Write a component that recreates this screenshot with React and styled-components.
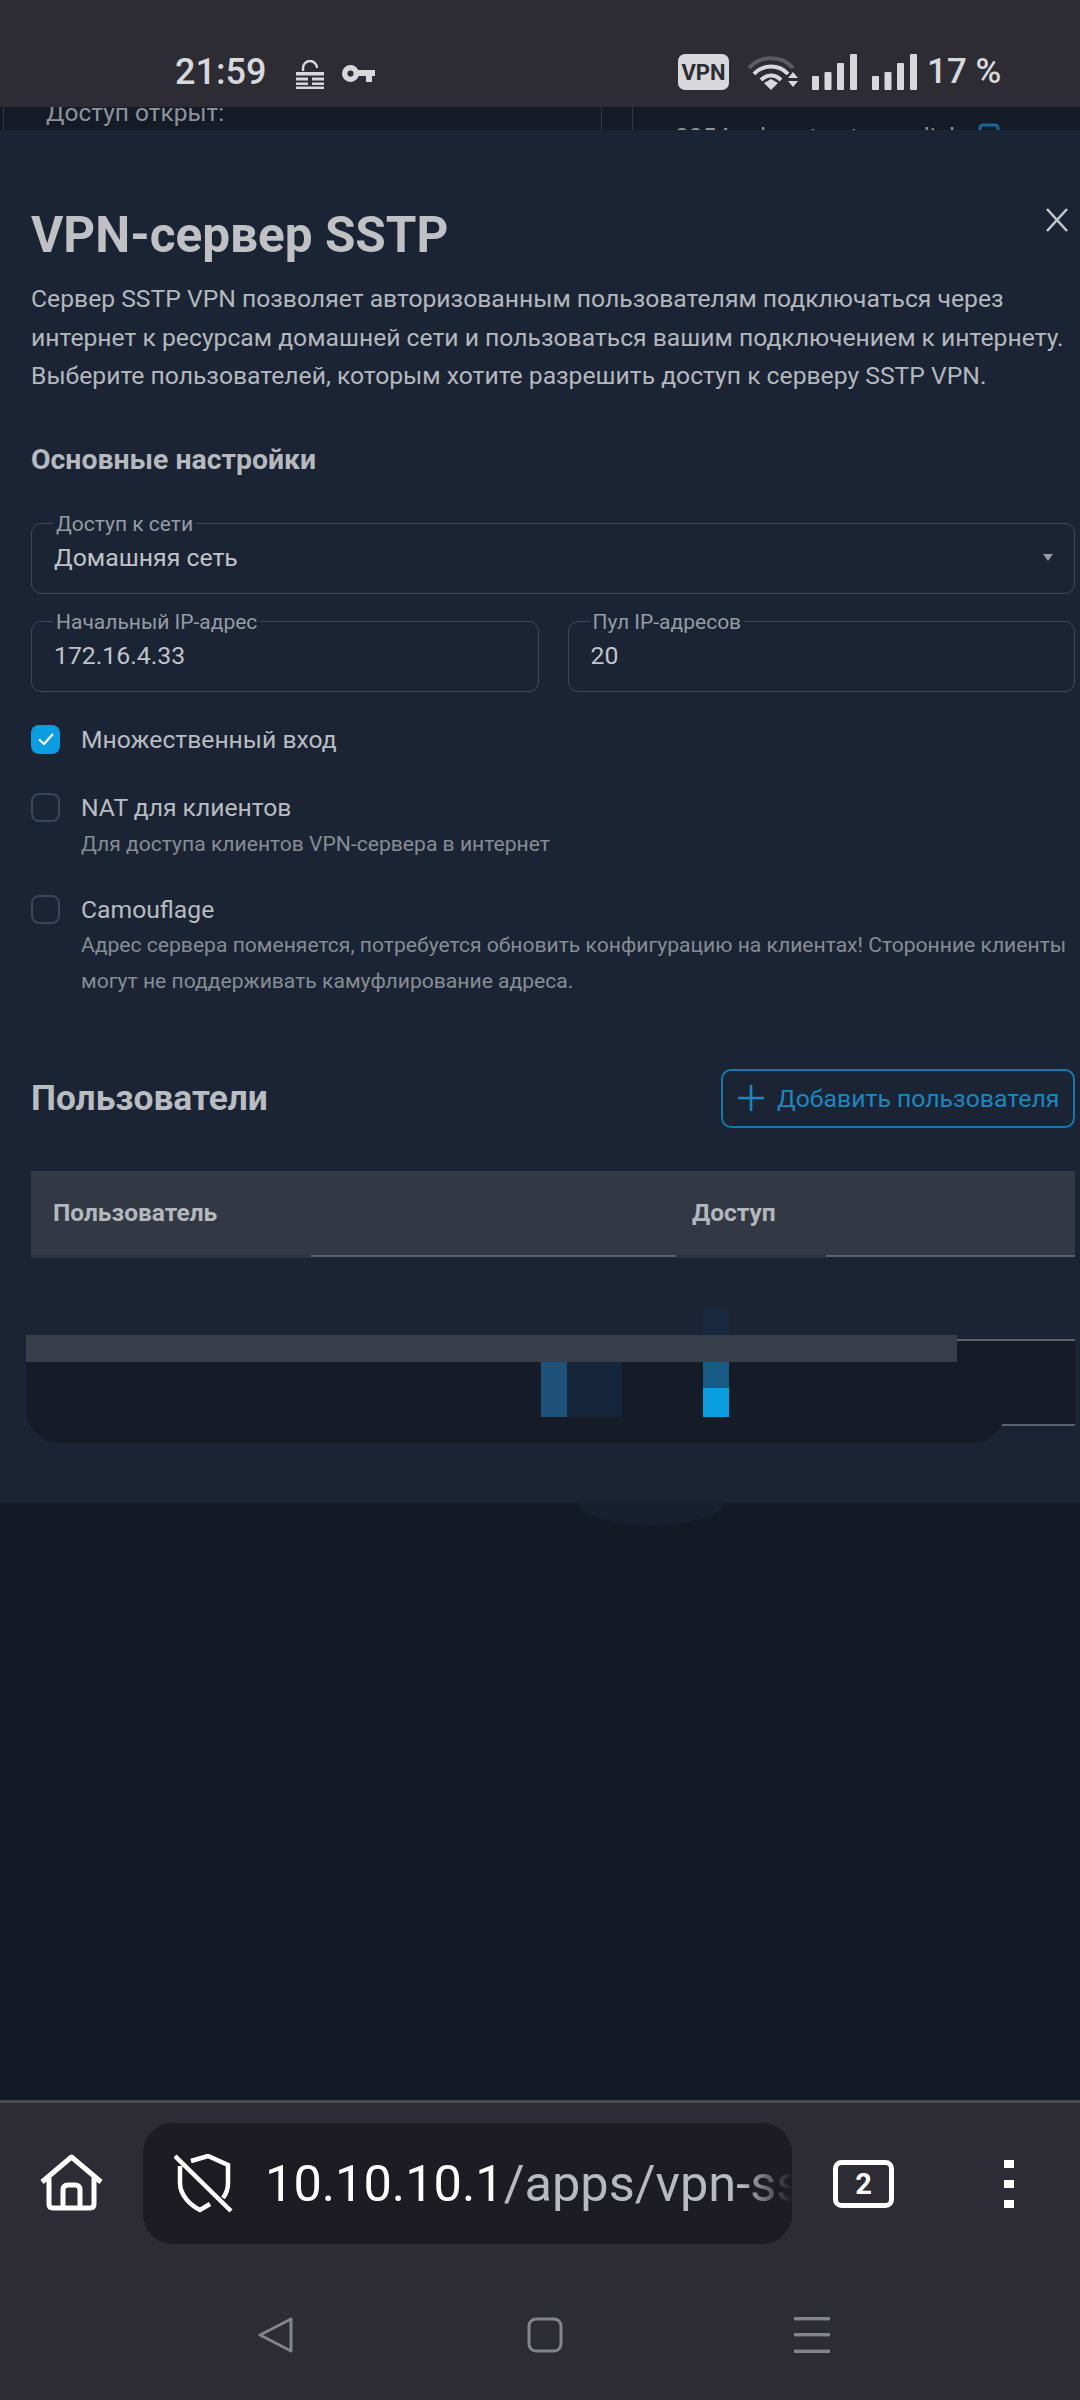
import React from 'react';
import styled, { createGlobalStyle } from 'styled-components';

const GlobalStyle = createGlobalStyle`
  html, body { margin: 0; padding: 0; background: #131a26; }
  * { box-sizing: border-box; }
  body { font-family: Roboto, "Noto Sans", sans-serif; }
`;

const Screen = styled.div`
  width: 1080px;
  height: 2400px;
  display: flex;
  flex-direction: column;
  overflow: hidden;
`;

const StatusBar = styled.div`
  height: 107px;
  flex: none;
  background: #2d2c35;
  display: flex;
  align-items: flex-start;
  padding: 54px 0 0 175px;
  color: #d8d8dc;
`;

const Clock = styled.div`
  font-size: 36px;
  font-weight: 500;
  line-height: 36px;
  width: 103px;
`;

const StatusLeft = styled.div`
  display: flex;
  align-items: center;
  gap: 18px;
  width: 503px;
`;

const StatusRight = styled.div`
  display: flex;
  align-items: center;
  height: 36px;
`;

const VpnBadge = styled.div`
  width: 51px;
  height: 36px;
  border-radius: 7px;
  background: #d8d8dc;
  color: #2d2c35;
  font-size: 22px;
  font-weight: 700;
  display: flex;
  align-items: center;
  justify-content: center;
  margin-right: 18px;
`;

const Battery = styled.div`
  font-size: 35px;
  font-weight: 500;
  line-height: 36px;
  margin-left: 10px;
  white-space: nowrap;
`;

const BehindStrip = styled.div`
  height: 23px;
  flex: none;
  background: #141a26;
  display: grid;
  grid-template-columns: 599px 30px 1fr;
  margin-left: 3px;
  overflow: hidden;
  color: #8e939b;
  font-size: 24.5px;
`;

const BehindCell = styled.div`
  border-left: ${(p) => (p.$line ? '1px solid #333a47' : 'none')};
  border-right: ${(p) => (p.$right ? '1px solid #333a47' : 'none')};
  padding-left: ${(p) => p.$pad || 0}px;
  display: flex;
  align-items: flex-start;
  gap: 16px;
  white-space: nowrap;
`;

const BehindText = styled.div`
  line-height: 24px;
  margin-top: ${(p) => p.$top}px;
`;

const Modal = styled.div`
  height: 1373px;
  flex: none;
  background: #1a2435;
  padding: 70px 5px 0 31px;
  display: flex;
  flex-direction: column;
`;

const TitleRow = styled.div`
  display: flex;
  justify-content: space-between;
  align-items: flex-start;
  height: 70px;
`;

const Title = styled.h1`
  margin: 0;
  font-size: 49.5px;
  font-weight: 700;
  line-height: 70px;
  color: #bfc1c4;
`;

const CloseButton = styled.div`
  width: 24px;
  height: 24px;
  margin: 8px 6px 0 0;
  color: #c4c7cb;
`;

const Intro = styled.p`
  margin: 10px 0 0;
  font-size: 24.7px;
  line-height: 38.5px;
  color: #b4b7bc;
  white-space: nowrap;
`;

const SectionTitle = styled.h2`
  margin: 44px 0 0;
  font-size: 28.4px;
  font-weight: 700;
  line-height: 40px;
  color: #b6b9bd;
`;

const FieldSet = styled.fieldset`
  margin: 0;
  padding: 0 22px;
  min-width: 0;
  height: 82px;
  border: 1.5px solid #3d4858;
  border-radius: 10px;
  display: flex;
  align-items: center;
  justify-content: space-between;
  flex: ${(p) => (p.$grow ? 1 : 'none')};
  width: ${(p) => (p.$grow ? 'auto' : '100%')};
`;

const Legend = styled.legend`
  margin-left: -1px;
  padding: 0 3px;
  font-size: 21px;
  line-height: 24px;
  height: 24px;
  color: #969ba3;
`;

const FieldValue = styled.div`
  font-size: 24.8px;
  color: #c0c3c7;
  margin-top: -14px;
`;

const Caret = styled.div`
  width: 0;
  height: 0;
  border-left: 5px solid transparent;
  border-right: 5px solid transparent;
  border-top: 7px solid #969ba3;
  margin: -14px -1px 0 0;
`;

const SelectWrap = styled.div`
  margin-top: 32px;
`;

const FieldRow = styled.div`
  display: flex;
  gap: 29px;
  margin-top: 16px;
`;

const Option = styled.div`
  display: grid;
  grid-template-columns: 29px 1fr;
  column-gap: 21px;
  margin-top: ${(p) => p.$top}px;
`;

const CheckBox = styled.div`
  width: 29px;
  height: 29px;
  border-radius: 8px;
  background: ${(p) => (p.$on ? '#0b9de2' : 'transparent')};
  border: ${(p) => (p.$on ? 'none' : '2px solid #3a465a')};
  display: flex;
  align-items: center;
  justify-content: center;
`;

const OptionLabel = styled.div`
  font-size: 24.7px;
  line-height: 29px;
  color: #b9bcc0;
`;

const OptionHelp = styled.div`
  grid-column: 2;
  margin-top: ${(p) => p.$top}px;
  font-size: 21.1px;
  line-height: 36px;
  color: #878c94;
  white-space: nowrap;
`;

const UsersHead = styled.div`
  display: flex;
  justify-content: space-between;
  align-items: center;
  margin-top: 70px;
`;

const UsersTitle = styled.h2`
  margin: 0;
  font-size: 35.3px;
  font-weight: 700;
  color: #b9bcc0;
`;

const AddButton = styled.div`
  width: 354px;
  height: 59px;
  border: 2px solid #1779ad;
  border-radius: 10px;
  display: flex;
  align-items: center;
  padding-left: 14px;
  gap: 12px;
  font-size: 24.8px;
  color: #1c86bf;
  white-space: nowrap;
`;

const Table = styled.div`
  position: relative;
  margin-top: 43px;
`;

const HeadRow = styled.div`
  height: 86px;
  background: #323844;
  border-bottom: 2px solid #5b626e;
  display: grid;
  grid-template-columns: 639px 1fr;
  align-items: center;
  padding-left: 22px;
  font-size: 24.5px;
  font-weight: 700;
  color: #b4b7bb;
`;

const BodyRow = styled.div`
  height: 84.5px;
  border-bottom: 2px solid #5b626e;
  background: ${(p) => p.$bg || 'transparent'};
`;

/* a smeared-out part of the picture, lies over the rows */
const Smear = styled.div`
  position: absolute;
  left: ${(p) => p.$left}px;
  top: ${(p) => p.$top}px;
  width: ${(p) => p.$w}px;
  height: ${(p) => p.$h}px;
  background: ${(p) => p.$bg};
  border-radius: ${(p) => p.$radius || '0'};
`;

const Backdrop = styled.div`
  flex: 1;
  position: relative;
  background: #131a26;
`;

const Bump = styled.div`
  position: absolute;
  top: 0;
  left: 578px;
  width: 145px;
  height: 22px;
  border-radius: 0 0 50% 50% / 0 0 100% 100%;
  background: #182030;
`;

const BrowserBar = styled.div`
  flex: none;
  height: 300px;
  background: #2d2c35;
  border-top: 3px solid #4a4a52;
  display: flex;
  flex-direction: column;
`;

const ToolRow = styled.div`
  height: 141px;
  flex: none;
  padding: 20px 0 0 40px;
  display: flex;
  align-items: flex-start;
  color: #fff;
`;

const ToolIcon = styled.div`
  margin-top: ${(p) => p.$top}px;
  margin-left: ${(p) => p.$left || 0}px;
  display: flex;
`;

const UrlBar = styled.div`
  width: 649px;
  height: 121px;
  margin-left: 40px;
  background: #1d1c22;
  border-radius: 30px;
  display: flex;
  align-items: center;
  padding-left: 31px;
  overflow: hidden;
  position: relative;
`;

const UrlShield = styled.div`
  flex: none;
  display: flex;
`;

const UrlText = styled.div`
  flex: none;
  margin-left: 31px;
  font-size: 50.5px;
  white-space: nowrap;
  color: #b9b9c0;
`;

const UrlHost = styled.span`
  color: #fff;
`;

const UrlFade = styled.div`
  position: absolute;
  right: 0;
  top: 0;
  bottom: 0;
  width: 50px;
  background: linear-gradient(to right, rgba(29, 28, 34, 0), #1d1c22);
`;

const NavRow = styled.div`
  flex: 1;
  display: flex;
  padding: 73px 0 0 258px;
  align-items: flex-start;
`;

const NavIcon = styled.div`
  margin-left: ${(p) => p.$left || 0}px;
  display: flex;
`;

const TabsBox = styled.div`
  position: relative;
  display: flex;
`;

const TabsCount = styled.div`
  position: absolute;
  inset: 0;
  display: flex;
  align-items: center;
  justify-content: center;
  font-size: 29px;
  font-weight: 700;
  color: #fff;
`;

function LockIcon() {
  return (
    <svg width="28" height="29" viewBox="0 0 28 29" fill="none" style={{ marginTop: 4 }}>
      <path d="M7 11V8a7 7 0 0 1 14 0" stroke="#d8d8dc" strokeWidth="2.4" />
      <path d="M0 12h28v3.5H0zM0 17.5h12v3H0zM16 17.5h12v3H16zM0 22.5h12v2.5H0zM16 22.5h12v2.5H16zM0 26.5h28V29H0z" fill="#d8d8dc" />
    </svg>
  );
}

function KeyIcon() {
  return (
    <svg width="33" height="18" viewBox="0 0 33 18" fill="none" style={{ marginTop: 4 }}>
      <circle cx="8.5" cy="8.5" r="5.8" stroke="#d8d8dc" strokeWidth="5.4" />
      <path d="M14 5h19v6h-3v6h-6v-6H14z" fill="#d8d8dc" />
    </svg>
  );
}

function WifiIcon() {
  return (
    <svg width="52" height="36" viewBox="0 0 52 36" fill="none" style={{ marginRight: 13 }}>
      <path d="M2 14C13 1 35 1 46 14" stroke="#5c5b63" strokeWidth="4" />
      <path d="M7 20C16 10 32 10 41 20" stroke="#d8d8dc" strokeWidth="4" />
      <path d="M14 26C20 20 28 20 34 26" stroke="#d8d8dc" strokeWidth="4" />
      <path d="M17 29l7-4 7 4-7 7z" fill="#d8d8dc" />
      <path d="M41 24l5-6 5 6zM41 27h10l-5 6z" fill="#d8d8dc" />
    </svg>
  );
}

function SignalIcon({ right }) {
  return (
    <svg width="45" height="36" viewBox="0 0 45 36" style={{ marginRight: right }}>
      <rect x="0" y="22" width="7" height="14" rx="1" fill="#d8d8dc" />
      <rect x="12.5" y="18" width="7" height="18" rx="1" fill="#d8d8dc" />
      <rect x="25" y="9" width="7" height="27" rx="1" fill="#d8d8dc" />
      <rect x="38" y="0" width="7" height="36" rx="1" fill="#d8d8dc" />
    </svg>
  );
}

function HomeIcon() {
  return (
    <svg width="63" height="57" viewBox="0 0 63 57" fill="none" stroke="#fff" strokeWidth="5">
      <path d="M2 28L31.5 3 61 28" strokeLinejoin="round" />
      <path d="M9 24v26q0 4 4 4h37q4 0 4-4V24" />
      <path d="M23 54V36q0-5 5-5h7q5 0 5 5v18" />
    </svg>
  );
}

function ShieldOffIcon() {
  return (
    <svg width="60" height="59" viewBox="0 0 60 59" fill="none" stroke="#fff" strokeWidth="4.5">
      <path d="M17 7L34 2l20 9v18c0 5-2 11-5 15" />
      <path d="M6 12v17c0 12 10 22 20 27l10-6" />
      <path d="M1 2l56 55" />
    </svg>
  );
}

function TabsIcon() {
  return (
    <svg width="61" height="48" viewBox="0 0 61 48" fill="none">
      <rect x="2.5" y="2.5" width="56" height="43" rx="6" stroke="#fff" strokeWidth="5" />
    </svg>
  );
}

function MenuIcon() {
  return (
    <svg width="10" height="48" viewBox="0 0 10 48" fill="#fff">
      <rect width="10" height="8" />
      <rect y="20" width="10" height="8" />
      <rect y="40" width="10" height="8" />
    </svg>
  );
}

function CheckMark() {
  return (
    <svg width="18" height="14" viewBox="0 0 18 14" fill="none" stroke="#fff" strokeWidth="2.2">
      <path d="M2 7.5L7 12 16 2" />
    </svg>
  );
}

export default function App() {
  return (
    <Screen>
      <GlobalStyle />
      <StatusBar>
        <StatusLeft>
          <Clock>21:59</Clock>
          <LockIcon />
          <KeyIcon />
        </StatusLeft>
        <StatusRight>
          <VpnBadge>VPN</VpnBadge>
          <WifiIcon />
          <SignalIcon right={15} />
          <SignalIcon right={0} />
          <Battery>17 %</Battery>
        </StatusRight>
      </StatusBar>

      <BehindStrip>
        <BehindCell $line $right $pad={42}>
          <BehindText $top={-6}>Доступ открыт:</BehindText>
        </BehindCell>
        <div />
        <BehindCell $line $pad={42}>
          <BehindText $top={18}>0254.vvhrout.netcraze.link</BehindText>
          <svg width="26" height="26" viewBox="0 0 26 26" fill="none" stroke="#17689b" strokeWidth="3" style={{ marginTop: 16, flex: 'none' }}>
            <rect x="2" y="2" width="18" height="18" rx="3" />
          </svg>
        </BehindCell>
      </BehindStrip>

      <Modal>
        <TitleRow>
          <Title>VPN-сервер SSTP</Title>
          <CloseButton>
            <svg width="24" height="24" viewBox="0 0 24 24" stroke="currentColor" strokeWidth="2.6">
              <path d="M2 1l20 22M22 1L2 23" />
            </svg>
          </CloseButton>
        </TitleRow>
        <Intro>
          Сервер SSTP VPN позволяет авторизованным пользователям подключаться через<br />
          интернет к ресурсам домашней сети и пользоваться вашим подключением к интернету.<br />
          Выберите пользователей, которым хотите разрешить доступ к серверу SSTP VPN.
        </Intro>

        <SectionTitle>Основные настройки</SectionTitle>

        <SelectWrap>
          <FieldSet>
            <Legend>Доступ к сети</Legend>
            <FieldValue>Домашняя сеть</FieldValue>
            <Caret />
          </FieldSet>
        </SelectWrap>

        <FieldRow>
          <FieldSet $grow>
            <Legend>Начальный IP-адрес</Legend>
            <FieldValue>172.16.4.33</FieldValue>
          </FieldSet>
          <FieldSet $grow>
            <Legend>Пул IP-адресов</Legend>
            <FieldValue>20</FieldValue>
          </FieldSet>
        </FieldRow>

        <Option $top={33}>
          <CheckBox $on><CheckMark /></CheckBox>
          <OptionLabel>Множественный вход</OptionLabel>
        </Option>

        <Option $top={39}>
          <CheckBox />
          <OptionLabel>NAT для клиентов</OptionLabel>
          <OptionHelp $top={4}>Для доступа клиентов VPN-сервера в интернет</OptionHelp>
        </Option>

        <Option $top={33}>
          <CheckBox />
          <OptionLabel>Camouflage</OptionLabel>
          <OptionHelp $top={3}>
            Адрес сервера поменяется, потребуется обновить конфигурацию на клиентах! Сторонние клиенты<br />
            могут не поддерживать камуфлирование адреса.
          </OptionHelp>
        </Option>

        <UsersHead>
          <UsersTitle>Пользователи</UsersTitle>
          <AddButton>
            <svg width="28" height="28" viewBox="0 0 28 28" stroke="#1c86bf" strokeWidth="2.6">
              <path d="M14 1v26M1 14h26" />
            </svg>
            Добавить пользователя
          </AddButton>
        </UsersHead>

        <Table>
          <HeadRow>
            <div>Пользователь</div>
            <div>Доступ</div>
          </HeadRow>
          <BodyRow />
          <BodyRow $bg="#161b27" />
          <Smear $left={0} $top={84} $w={280} $h={3} $bg="#2c3340" />
          <Smear $left={645} $top={84} $w={150} $h={3} $bg="#2c3340" />
          <Smear $left={672} $top={137} $w={26} $h={28} $bg="#1a2a3e" />
          <Smear $left={-5} $top={164} $w={931} $h={27} $bg="#383d4a" />
          <Smear $left={-5} $top={191} $w={980} $h={81} $bg="#151b27" $radius="0 0 34px 34px" />
          <Smear $left={510} $top={191} $w={26} $h={55} $bg="#1f527a" />
          <Smear $left={536} $top={191} $w={55} $h={55} $bg="#16263a" />
          <Smear $left={672} $top={191} $w={26} $h={26} $bg="#175a85" />
          <Smear $left={672} $top={217} $w={26} $h={29} $bg="#0a9de0" />
        </Table>
      </Modal>

      <Backdrop>
        <Bump />
      </Backdrop>

      <BrowserBar>
        <ToolRow>
          <ToolIcon $top={31}><HomeIcon /></ToolIcon>
          <UrlBar>
            <UrlShield><ShieldOffIcon /></UrlShield>
            <UrlText><UrlHost>10.10.10.1</UrlHost>/apps/vpn-sstp</UrlText>
            <UrlFade />
          </UrlBar>
          <ToolIcon $top={37} $left={41}>
            <TabsBox>
              <TabsIcon />
              <TabsCount>2</TabsCount>
            </TabsBox>
          </ToolIcon>
          <ToolIcon $top={37} $left={110}><MenuIcon /></ToolIcon>
        </ToolRow>
        <NavRow>
          <NavIcon>
            <svg width="36" height="36" viewBox="0 0 36 36" fill="none" stroke="#84848b" strokeWidth="3">
              <path d="M33 2v32L2 18z" strokeLinejoin="round" />
            </svg>
          </NavIcon>
          <NavIcon $left={233}>
            <svg width="36" height="36" viewBox="0 0 36 36" fill="none" stroke="#84848b" strokeWidth="3">
              <rect x="2" y="2" width="32" height="32" rx="7" />
            </svg>
          </NavIcon>
          <NavIcon $left={231}>
            <svg width="36" height="36" viewBox="0 0 36 36" fill="#84848b">
              <rect width="36" height="3.4" />
              <rect y="16" width="36" height="3.4" />
              <rect y="32.6" width="36" height="3.4" />
            </svg>
          </NavIcon>
        </NavRow>
      </BrowserBar>
    </Screen>
  );
}
